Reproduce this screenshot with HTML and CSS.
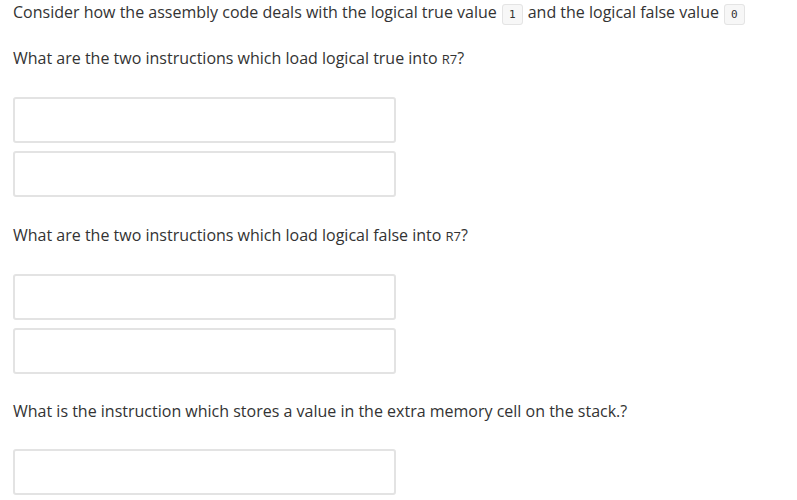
FILE: index.html
```html
<!DOCTYPE html>
<html>
<head>
<meta charset="utf-8">
<link rel="stylesheet" href="styles.css">
</head>
<body>
<div class="page">
  <p class="intro">Consider how the assembly code deals with the logical true value <code class="val">1</code> and the logical false value <code class="val">0</code></p>

  <p class="question first">What are the two instructions which load logical true into <span class="reg">R7</span>?</p>
  <div class="answers">
    <input class="answer" type="text">
    <input class="answer" type="text">
  </div>

  <p class="question">What are the two instructions which load logical false into <span class="reg">R7</span>?</p>
  <div class="answers">
    <input class="answer" type="text">
    <input class="answer" type="text">
  </div>

  <p class="question last">What is the instruction which stores a value in the extra memory cell on the stack.?</p>
  <div class="answers">
    <input class="answer" type="text">
  </div>
</div>
</body>
</html>
```
FILE: styles.css
```css
html, body {
  margin: 0;
  padding: 0;
  background: #ffffff;
}
.page {
  padding: 2px 13px 0 13px;
  font-family: "Open Sans", "Liberation Sans", sans-serif;
  font-size: 16px;
  color: #333333;
}
p {
  margin: 0;
  line-height: 20px;
}
.question {
  margin-top: 28px;
}
.question.first {
  margin-top: 23px;
}
.question.last {
  margin-top: 27px;
}
.answers {
  margin-top: 28px;
  display: flex;
  flex-direction: column;
  gap: 8px;
}
.answer {
  display: block;
  box-sizing: border-box;
  width: 383px;
  height: 46px;
  margin: 0;
  border: 2px solid #e3e3e3;
  border-radius: 3px;
  background: #ffffff;
  font: inherit;
}
.val {
  font-family: "DejaVu Sans Mono", "Liberation Mono", monospace;
  font-size: 11px;
  background: #f7f7f7;
  border: 1px solid #e4e4e4;
  border-radius: 3px;
  padding: 3px 6px;
  margin: 0 1px;
  color: #333;
}
.reg {
  font-size: 13px;
}
```
